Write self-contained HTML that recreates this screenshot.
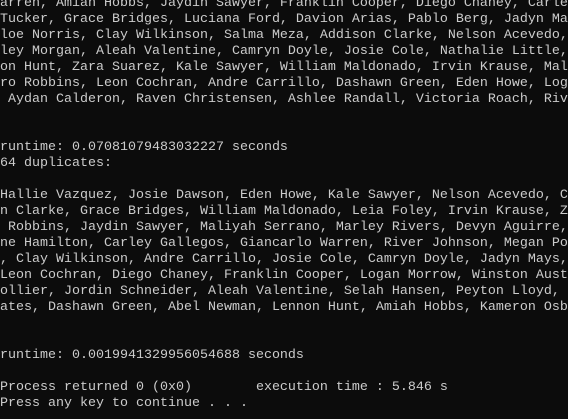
<!DOCTYPE html>
<html><head><meta charset="utf-8"><style>
html,body{margin:0;padding:0;background:#0c0c0c;width:568px;height:419px;overflow:hidden}
pre{position:absolute;left:0;top:-4px;width:568px;height:423px;overflow:hidden;margin:0;font-family:"Liberation Mono",monospace;font-size:13.33px;line-height:16px;color:#cccccc;white-space:pre}
</style></head><body><pre>arren, Amiah Hobbs, Jaydin Sawyer, Franklin Cooper, Diego Chaney, Carley
Tucker, Grace Bridges, Luciana Ford, Davion Arias, Pablo Berg, Jadyn Mays
loe Norris, Clay Wilkinson, Salma Meza, Addison Clarke, Nelson Acevedo, C
ley Morgan, Aleah Valentine, Camryn Doyle, Josie Cole, Nathalie Little, R
on Hunt, Zara Suarez, Kale Sawyer, William Maldonado, Irvin Krause, Mali
ro Robbins, Leon Cochran, Andre Carrillo, Dashawn Green, Eden Howe, Logan
 Aydan Calderon, Raven Christensen, Ashlee Randall, Victoria Roach, River


runtime: 0.07081079483032227 seconds
64 duplicates:

Hallie Vazquez, Josie Dawson, Eden Howe, Kale Sawyer, Nelson Acevedo, Cl
n Clarke, Grace Bridges, William Maldonado, Leia Foley, Irvin Krause, Za
 Robbins, Jaydin Sawyer, Maliyah Serrano, Marley Rivers, Devyn Aguirre, 
ne Hamilton, Carley Gallegos, Giancarlo Warren, River Johnson, Megan Porter
, Clay Wilkinson, Andre Carrillo, Josie Cole, Camryn Doyle, Jadyn Mays, 
Leon Cochran, Diego Chaney, Franklin Cooper, Logan Morrow, Winston Austin
ollier, Jordin Schneider, Aleah Valentine, Selah Hansen, Peyton Lloyd, R
ates, Dashawn Green, Abel Newman, Lennon Hunt, Amiah Hobbs, Kameron Osborne


runtime: 0.0019941329956054688 seconds

Process returned 0 (0x0)        execution time : 5.846 s
Press any key to continue . . .</pre></body></html>
